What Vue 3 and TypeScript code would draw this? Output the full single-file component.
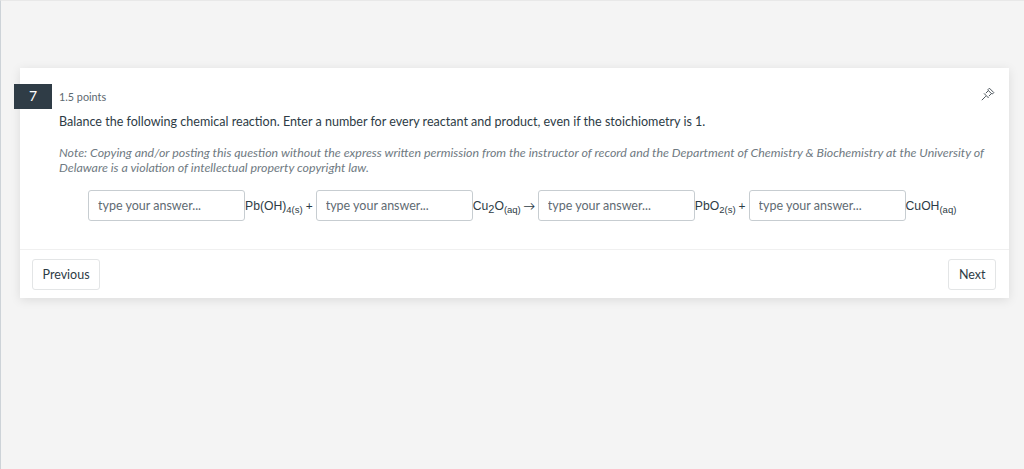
<script setup lang="ts">
interface Term {
  formula: string;
  sub: string;
  tail?: string;
  after?: string;
}

const terms: Term[] = [
  { formula: "Pb(OH)", sub: "4(s)", after: "+" },
  { formula: "Cu", sub: "2", tail: "O", after: "→" },
  { formula: "PbO", sub: "2(s)", after: "+" },
  { formula: "CuOH", sub: "(aq)" },
];
</script>

<template>
  <main class="page">
    <section class="card">
      <div class="badge">7</div>
      <header class="head">
        <span class="points">1.5 points</span>
        <svg class="pin" width="14" height="14" viewBox="0 0 14 14" fill="none" stroke="#3a444c" stroke-width="0.9">
          <path d="M0.8 13.2 4.8 9.2" />
          <path d="M3 6.4 7.6 11" />
          <path d="M4.8 6.2 7.4 3.6M7.8 9.2 10.4 6.6" />
          <path d="M7.4 3.6 7 2.6 8.4 1.2 12.8 5.6 11.4 7 10.4 6.6 7.4 3.6Z" />
        </svg>
      </header>
      <div class="body">
        <p class="lead">Balance the following chemical reaction. Enter a number for every reactant and product, even if the stoichiometry is 1.</p>
        <p class="note">Note: Copying and/or posting this question without the express written permission from the instructor of record and the Department of Chemistry &amp; Biochemistry at the University of Delaware is a violation of intellectual property copyright law.</p>
        <div class="equation">
          <template v-for="(t, i) in terms" :key="i">
            <input class="answer" type="text" placeholder="type your answer..." />
            <span class="chem">{{ t.formula }}<sub :class="{ digit: t.tail }">{{ t.sub }}</sub><template v-if="t.tail">{{ t.tail }}<sub>(aq)</sub></template></span>
            <span v-if="t.after" class="op" :class="{ arrow: t.tail }">{{ t.after }}</span>
          </template>
        </div>
      </div>
      <footer class="foot">
        <button class="btn" type="button">Previous</button>
        <button class="btn" type="button">Next</button>
      </footer>
    </section>
  </main>
</template>

<style>
html,
body {
  margin: 0;
  background: #f4f4f4;
}
</style>

<style scoped>
.page {
  box-sizing: border-box;
  height: 469px;
  padding: 67px 15px 0 19px;
  background: #f4f4f4;
  border-left: 1px solid #cdd3d8;
  border-top: 1px solid #e8e8e8;
  font-family: Lato, sans-serif;
  color: #2d3b45;
  overflow: hidden;
}
.card {
  position: relative;
  height: 230px;
  background: #fff;
  box-shadow: 0 2px 10px rgba(0, 0, 0, 0.1);
}
.badge {
  position: absolute;
  left: -6px;
  top: 16px;
  width: 38px;
  height: 25px;
  background: #2f3c46;
  color: #fff;
  font-size: 14px;
  line-height: 24px;
  text-align: center;
}
.head {
  display: flex;
  align-items: center;
  justify-content: space-between;
  height: 15px;
  padding: 21px 14px 0 39px;
}
.points {
  font-size: 10.8px;
  color: #5c6870;
}
.body {
  padding: 10px 20px 0 39px;
}
.lead {
  margin: 0;
  font-size: 12.55px;
  line-height: 16px;
}
.note {
  margin: 15px 0 0;
  font-size: 12.4px;
  line-height: 15px;
  font-style: italic;
  color: #6f7a82;
}
.equation {
  display: flex;
  align-items: center;
  margin: 15px 0 0 29px;
}
.answer {
  box-sizing: border-box;
  width: 157px;
  height: 31px;
  flex: none;
  padding: 0 9px;
  border: 1px solid #c7cdd1;
  border-radius: 3px;
  background: #fff;
  font-family: Lato, sans-serif;
  font-size: 12.5px;
  color: #2d3b45;
  outline: none;
}
.answer::placeholder {
  color: #5f6b73;
  opacity: 1;
}
.chem {
  font-family: "Liberation Sans", Arial, sans-serif;
  font-size: 12.2px;
  line-height: 18px;
  white-space: nowrap;
}
.chem sub {
  font-size: 9.5px;
  line-height: 0;
  vertical-align: -3px;
}
.chem sub.digit {
  font-size: 11px;
}
.op {
  width: 13px;
  font-size: 12px;
  text-align: center;
}
.op.arrow {
  width: 17px;
}
.foot {
  display: flex;
  justify-content: space-between;
  margin-top: 28px;
  padding: 9px 13px 0 12px;
  border-top: 1px solid #f0f0f0;
}
.btn {
  height: 31px;
  padding: 0 9.5px;
  background: #fff;
  border: 1px solid #e3e5e6;
  border-radius: 3px;
  font-family: Lato, sans-serif;
  font-size: 12.5px;
  color: #2d3b45;
}
.pin {
  display: block;
  margin-bottom: 6px;
}
</style>
